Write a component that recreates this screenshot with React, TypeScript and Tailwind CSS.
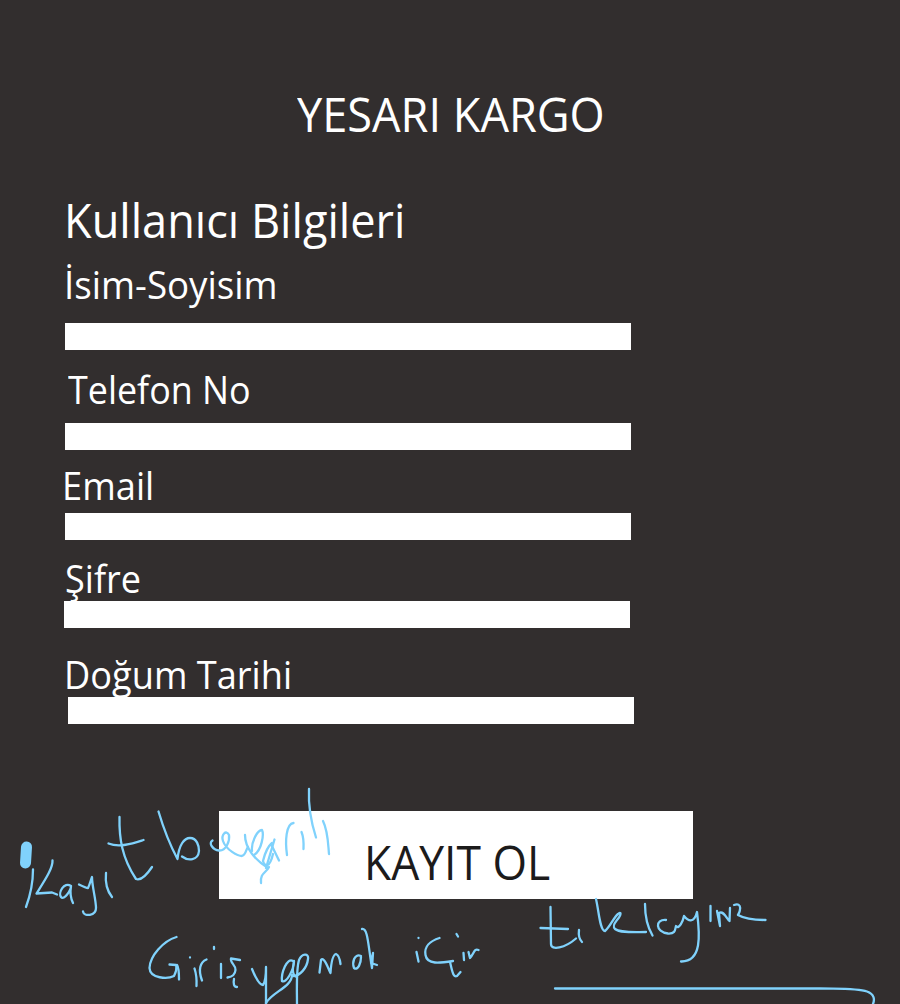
const FONT = "font-['Open_Sans','Noto_Sans',sans-serif]";

function Heading({ text, className }: { text: string; className: string }) {
  return (
    <span className={`block w-max whitespace-nowrap text-[47.5px] leading-[51px] origin-left ${className}`}>
      {text}
    </span>
  );
}

type FieldProps = { label: string; labelClass: string; inputClass: string };

function Field({ label, labelClass, inputClass }: FieldProps) {
  return (
    <label className="flex flex-col items-start">
      <span className={`block w-max whitespace-nowrap text-[39px] leading-[43px] origin-left ${labelClass}`}>
        {label}
      </span>
      <input className={`block h-[27px] w-[566px] bg-white px-2 text-base text-black outline-none ${inputClass}`} />
    </label>
  );
}

const strokes = [
  // kayıt
  "M33 869.5 Q33 888 26 907",
  "M52.5 860.5 C53 868 45 880 36.5 893.5 L52 892.5 L57 894.5",
  "M71 886 C64 881 58 893 61 897 C64 901 71 890 71 886 C70 892 71 899 73 903",
  "M79 884.5 C82 886 86 888 88 888 C90 884 91 879 92 877 C92 886 96 900 96 908 C96 916 84 917 83 911.5",
  "M106 873 C105 883 108 892 112 897",
  "M119.5 817 C119 838 122 858 136 879 C141 881 146 876 152 867",
  "M108.5 843.5 C120 848 134 843 143.5 840",
  // başarılı
  "M158.5 811.5 C164 830 170 845 177.5 859 C179 845 184 838 190 838 C197 838 199 846 199 851 C198 861 188 861 182 856.5",
  "M212.5 840.5 C208 843 213 850 219 850.5 C226 851 230 841 229 835 C226 829 221 835 223 841 C226 850 238 856 242 856 C246 855 246 849 248 847",
  "M245 835 C245 848 255 860 268 868",
  "M252 851 C251 843 257 830 262 830 C264 834 262 850 254 855",
  "M274.5 839.5 L266 868",
  "M272 843 C266 848 264 857 263 861 C265 868 270 867 273 854",
  "M271 844 L279 860.5",
  "M269 867 C266 873 260 873 261 883",
  "M293.5 823 C286 824 285 841 287 855",
  "M301.5 832 Q304 838 303.5 849",
  "M309 789 C308 810 312 825 316 837.5",
  "M323 821 C328 831 328 843 329 854",
  // giriş
  "M176.5 937 C163 941 150 956 149.5 968 C150 979 168 979 174 976 C176 972 177 968 176 965 L169.5 964.5",
  "M177 965 C179 968 179 973 179 979.5",
  "M190 957.5 v0.1",
  "M194.5 968.5 Q197 976 196.5 986",
  "M206.5 959.5 C200 962 198 970 202 980.5",
  "M214 947 v2",
  "M221 964 V978",
  "M240 960 L231 958.5 C230 963 236 965 235.5 970 C235 976 231 977 227.5 977.5",
  "M234 979 C233 984 234 987 237 987",
  // yapmak
  "M252 969 C256 979 260 985 263 985 C266 981 266 972 266 967 V1004",
  "M266 1003 C272 992 292 987 292 975",
  "M293 961 C287 957 281 973 282 981 C286 984 294 970 294 961 C292 970 293 976 297 977",
  "M297 1004 C297 990 296 970 299 960 C302 953 309 953 308 959 C307 968 300 976 293 976",
  "M319.5 972.5 L321 960 C324 956 328 968 330.5 973 C331 965 332 955 336 954 C339 955 340 960 340.5 964",
  "M361 956 C354 953 352 963 354 968 C358 971 361 963 361 957",
  "M362 929 C368 928 368 945 372 968 L373 953 L371 963 L377 965",
  // için
  "M418.5 938 v0.1",
  "M416.5 952 L418.5 961.5",
  "M439.5 938 C430 941 424 947 425.5 955 C427 965 440 963 453 961",
  "M450 962 C452 970 453 978 457 976 L460.5 972",
  "M456.5 934 L458 936.5",
  "M463.5 953 L464 960",
  "M468.5 952 L470 958 C474 954 474 948 478.5 950",
  // tıklayınız
  "M550.5 907 L551 944 C551 951 565 948 576 938.5",
  "M540.5 928 L568 929",
  "M579 930 Q578 938 582 942",
  "M596 899 C599 912 600 931 605 931 C610 927 614 917 618 914 C621 911 622 914 617 920 C613 925 613 927 615 929 C620 933 633 932 646 932",
  "M645 904 C645 918 648 928 652.5 935.5",
  "M666 920 C655 919 655 932 668 933.5 C676 934 675 929 676 926 C679 930 683 921 684 916 C688 921 694 924 697 912 C700 935 702 962 681 961.5",
  "M710.5 906 V921",
  "M717 911 L720 926 L719 913 C724 910 727 920 729.5 921 L730 908",
  "M734 905 C743 902 740 912 738 915 C745 919 755 920 765.5 920",
  "M555 988.5 H820 C845 989 858 988.5 867 991.5 C874 994 875 999 873 1004",
];

function Handwriting() {
  return (
    <svg
      className="pointer-events-none absolute inset-0"
      width="900"
      height="1004"
      viewBox="0 0 900 1004"
      fill="none"
      stroke="#80d2fc"
      strokeLinecap="round"
      strokeLinejoin="round"
    >
      <path d="M26.5 847 L25.5 863" strokeWidth="11" />
      {strokes.map((d) => (
        <path key={d} d={d} strokeWidth="2.3" />
      ))}
    </svg>
  );
}

export default function App() {
  return (
    <main className={`relative h-[1004px] w-[900px] overflow-hidden bg-[#322e2e] text-white ${FONT}`}>
      <form className="flex flex-col items-start pt-[88px]">
        <Heading text="YESARI KARGO" className="ml-[297px] scale-x-[0.95]" />
        <Heading text="Kullanıcı Bilgileri" className="mt-[55px] ml-[64px] scale-x-[0.95]" />
        <div className="mt-[17px]">
          <Field label="İsim-Soyisim" labelClass="ml-[64px] scale-x-[0.942]" inputClass="mt-[18px] ml-[65px]" />
        </div>
        <div className="mt-[17px]">
          <Field label="Telefon No" labelClass="ml-[68px] scale-x-[0.92]" inputClass="mt-[13px] ml-[65px]" />
        </div>
        <div className="mt-[13px]">
          <Field label="Email" labelClass="ml-[62px] scale-x-[0.93]" inputClass="mt-[7px] ml-[65px]" />
        </div>
        <div className="mt-4">
          <Field label="Şifre" labelClass="ml-[65px] scale-x-[0.925]" inputClass="mt-[2px] ml-[64px]" />
        </div>
        <div className="mt-6">
          <Field label="Doğum Tarihi" labelClass="ml-[64px] scale-x-[0.928]" inputClass="mt-[2px] ml-[68px]" />
        </div>
        <button
          type="button"
          className="mt-[87px] ml-[219px] flex h-[88px] w-[474px] items-start bg-white pt-[25px] pl-[145px] text-[#1c1b1b]"
        >
          <Heading text="KAYIT OL" className="scale-x-[0.935]" />
        </button>
      </form>
      <Handwriting />
    </main>
  );
}
